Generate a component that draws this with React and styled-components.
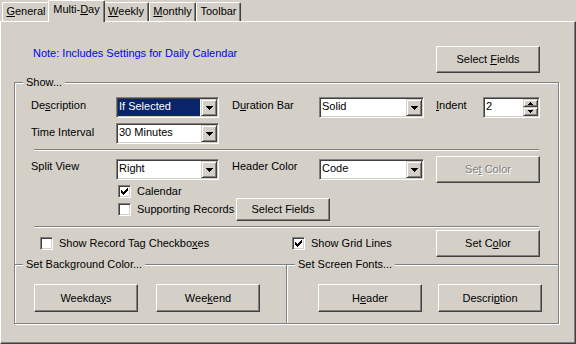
import React from 'react';
import styled, { createGlobalStyle, css } from 'styled-components';

const FACE = '#d4d0c8';
const LIGHT = '#ffffff';
const SHADOW = '#808080';
const DARK = '#404040';
const NAVY = '#0a246a';
const FONT = '"Liberation Sans", Arial, sans-serif';

const Global = createGlobalStyle`
  html, body { margin: 0; padding: 0; background: ${FACE}; }
  body { font-family: ${FONT}; font-size: 11px; line-height: 13px; color: #000; }
  #root { width: 576px; height: 344px; overflow: hidden; }
  * { box-sizing: border-box; }
`;

const Window = styled.div`
  width: 576px;
  height: 344px;
  display: flex;
  flex-direction: column;
  background: ${FACE};
`;

const TabStrip = styled.div`
  display: flex;
  align-items: flex-end;
  height: 21px;
  padding-left: 2px;
  position: relative;
  z-index: 1;
`;

const Tab = styled.div`
  flex: none;
  width: ${(p) => p.$w}px;
  height: 19px;
  border-top: 1px solid ${LIGHT};
  border-left: 1px solid ${LIGHT};
  border-right: 1px solid ${DARK};
  box-shadow: inset -1px 0 ${SHADOW};
  border-radius: 2px 2px 0 0;
  display: flex;
  justify-content: center;
  padding-top: 2px;
  background: ${FACE};
  white-space: nowrap;
  ${(p) =>
    p.$active &&
    css`
      width: ${p.$w + 4}px;
      height: 22px;
      margin: 0 -2px -1px;
      padding-top: 2px;
      position: relative;
      z-index: 2;
    `}
`;

const Panel = styled.div`
  width: 576px;
  height: 323px;
  border-top: 1px solid ${LIGHT};
  border-left: 1px solid ${LIGHT};
  border-right: 1px solid ${DARK};
  border-bottom: 1px solid ${DARK};
  box-shadow: inset -1px -1px ${SHADOW};
  padding: 24px 0 0 13px;
  display: flex;
  flex-direction: column;
`;

const TopRow = styled.div`
  width: 546px;
  display: flex;
  justify-content: space-between;
  align-items: flex-start;
  padding: 0 20px 0 19px;
`;

const Note = styled.span`
  color: #0000ff;
  margin-top: 1px;
`;

const Group = styled.div`
  position: relative;
  width: 545px;
  height: 242px;
  margin-top: 9px;
  border: 1px solid ${SHADOW};
  box-shadow: 1px 1px 0 ${LIGHT}, inset 1px 1px 0 ${LIGHT};
  padding-top: 14px;
  display: flex;
  flex-direction: column;
`;

const Legend = styled.span`
  position: absolute;
  top: -7px;
  left: 8px;
  padding: 0 3px;
  background: ${FACE};
  white-space: nowrap;
`;

const Row = styled.div`
  display: flex;
  align-items: ${(p) => p.$align || 'flex-start'};
  height: ${(p) => p.$h}px;
  margin-top: ${(p) => p.$mt || 0}px;
  padding-left: ${(p) => (p.$pl ?? 16)}px;
`;

const Label = styled.span`
  flex: none;
  width: ${(p) => p.$w}px;
  margin-left: ${(p) => p.$ml || 0}px;
  padding-top: ${(p) => p.$pt ?? 1}px;
  white-space: nowrap;
`;

const U = styled.span`
  text-decoration: underline;
  text-underline-offset: 1px;
`;

const Separator = styled.div`
  height: 2px;
  margin: ${(p) => p.$mt}px 19px 0;
  border-top: 1px solid ${SHADOW};
  border-bottom: 1px solid ${LIGHT};
`;

const Sunken = styled.div`
  flex: none;
  width: ${(p) => p.$w}px;
  height: 21px;
  margin-top: ${(p) => p.$mt || 0}px;
  margin-left: ${(p) => p.$ml || 0}px;
  border: 1px solid;
  border-color: ${SHADOW} ${LIGHT} ${LIGHT} ${SHADOW};
  box-shadow: inset 1px 1px ${DARK}, inset -1px -1px ${FACE};
  background: ${LIGHT};
  padding: 1px;
  display: flex;
`;

const FieldText = styled.span`
  flex: 1;
  margin-right: 1px;
  padding: 1px 0 0 1px;
  white-space: nowrap;
  overflow: hidden;
  ${(p) =>
    p.$selected &&
    css`
      background: ${NAVY};
      color: ${LIGHT};
    `}
`;

const RaisedBtn = styled.span`
  flex: none;
  width: ${(p) => p.$w || 16}px;
  height: ${(p) => p.$h || 17}px;
  border: 1px solid;
  border-color: ${FACE} ${DARK} ${DARK} ${FACE};
  box-shadow: inset 1px 1px ${LIGHT}, inset -1px -1px ${SHADOW};
  background: ${FACE};
  display: flex;
  align-items: center;
  justify-content: center;
`;

const SpinStack = styled.span`
  flex: none;
  display: flex;
  flex-direction: column;
`;

const Button = styled.button`
  flex: none;
  width: ${(p) => p.$w}px;
  height: ${(p) => p.$h}px;
  margin-left: ${(p) => p.$ml || 0}px;
  padding: 0;
  font-family: ${FONT};
  font-size: 11px;
  line-height: 13px;
  color: #000;
  background: ${FACE};
  border: 1px solid;
  border-color: ${LIGHT} ${DARK} ${DARK} ${LIGHT};
  box-shadow: inset -1px -1px ${SHADOW}, inset 1px 1px ${FACE};
  outline: none;
  &:disabled {
    color: ${SHADOW};
    text-shadow: 1px 1px 0 ${LIGHT};
  }
`;

const Check = styled.label`
  flex: none;
  display: flex;
  align-items: center;
  gap: 6px;
  width: ${(p) => (p.$w ? `${p.$w}px` : 'auto')};
  height: 13px;
  white-space: nowrap;
`;

const Box = styled.span`
  flex: none;
  width: 13px;
  height: 13px;
  border: 1px solid;
  border-color: ${SHADOW} ${LIGHT} ${LIGHT} ${SHADOW};
  box-shadow: inset 1px 1px ${DARK}, inset -1px -1px ${FACE};
  background: ${LIGHT};
  display: flex;
  align-items: center;
  justify-content: center;
`;

const BottomSection = styled.div`
  flex: 1;
  margin-top: 7px;
  display: flex;
  border-top: 1px solid ${SHADOW};
  box-shadow: inset 0 1px 0 ${LIGHT};
`;

const SubGroup = styled.div`
  position: relative;
  flex: ${(p) => (p.$w ? 'none' : '1')};
  width: ${(p) => (p.$w ? `${p.$w}px` : 'auto')};
  display: flex;
  align-items: flex-start;
  gap: ${(p) => p.$gap}px;
  padding: 19px 0 0 ${(p) => p.$pl}px;
  ${(p) =>
    p.$divider
      ? css`
          border-right: 1px solid ${SHADOW};
        `
      : css`
          box-shadow: inset 1px 0 0 ${LIGHT};
        `}
`;

const DownArrow = () => (
  <svg width="7" height="4" viewBox="0 0 7 4" shapeRendering="crispEdges">
    <path d="M0 0h7v1H0zM1 1h5v1H1zM2 2h3v1H2zM3 3h1v1H3z" fill="#000" />
  </svg>
);

const SmallArrow = ({ up }) => (
  <svg width="5" height="3" viewBox="0 0 5 3" shapeRendering="crispEdges">
    <path d={up ? 'M2 0h1v1H2zM1 1h3v1H1zM0 2h5v1H0z' : 'M0 0h5v1H0zM1 1h3v1H1zM2 2h1v1H2z'} fill="#000" />
  </svg>
);

const Tick = () => (
  <svg width="7" height="7" viewBox="0 0 7 7" shapeRendering="crispEdges">
    <path
      d="M6 0h1v3H6zM5 1h1v3H5zM4 2h1v3H4zM3 3h1v3H3zM2 4h1v3H2zM1 3h1v3H1zM0 2h1v3H0z"
      fill="#000"
    />
  </svg>
);

const Combo = ({ w, mt, ml, value, selected }) => (
  <Sunken $w={w} $mt={mt} $ml={ml}>
    <FieldText $selected={selected}>{value}</FieldText>
    <RaisedBtn>
      <DownArrow />
    </RaisedBtn>
  </Sunken>
);

const Spin = ({ w, value }) => (
  <Sunken $w={w}>
    <FieldText>{value}</FieldText>
    <SpinStack>
      <RaisedBtn $w={15} $h={8}>
        <SmallArrow up />
      </RaisedBtn>
      <RaisedBtn $w={15} $h={9}>
        <SmallArrow />
      </RaisedBtn>
    </SpinStack>
  </Sunken>
);

const CheckBox = ({ checked, children, w }) => (
  <Check $w={w}>
    <Box>{checked && <Tick />}</Box>
    <span>{children}</span>
  </Check>
);

const tabs = [
  { key: 'general', w: 48, label: <><U>G</U>eneral</> },
  { key: 'multi', w: 53, label: <>Multi-<U>D</U>ay</>, active: true },
  { key: 'weekly', w: 46, label: <><U>W</U>eekly</> },
  { key: 'monthly', w: 47, label: <><U>M</U>onthly</> },
  { key: 'toolbar', w: 45, label: <>Toolbar</> },
];

export default function App() {
  return (
    <>
      <Global />
      <Window>
        <TabStrip>
          {tabs.map((t) => (
            <Tab key={t.key} $w={t.w} $active={t.active}>
              {t.label}
            </Tab>
          ))}
        </TabStrip>
        <Panel>
          <TopRow>
            <Note>Note: Includes Settings for Daily Calendar</Note>
            <Button $w={104} $h={27}>
              Select <U>F</U>ields
            </Button>
          </TopRow>

          <Group>
            <Legend>Show...</Legend>

            <Row $h={21}>
              <Label $w={85} $pt={2}>
                De<U>s</U>cription
              </Label>
              <Combo w={103} value="If Selected" selected />
              <Label $w={87} $ml={13} $pt={2}>
                D<U>u</U>ration Bar
              </Label>
              <Combo w={105} value="Solid" />
              <Label $w={47} $ml={12} $pt={2}>
                <U>I</U>ndent
              </Label>
              <Spin w={57} value="2" />
            </Row>

            <Row $h={21} $mt={5}>
              <Label $w={85} $pt={3}>
                Time Interval
              </Label>
              <Combo w={103} value="30 Minutes" />
            </Row>

            <Separator $mt={5} />

            <Row $h={27} $mt={5}>
              <Label $w={85} $pt={4}>
                Split View
              </Label>
              <Combo w={103} mt={3} value="Right" />
              <Label $w={87} $ml={13} $pt={4}>
                Header Color
              </Label>
              <Combo w={105} mt={3} value="Code" />
              <Button $w={104} $h={27} $ml={12} disabled>
                Se<U>t</U> Color
              </Button>
            </Row>

            <Row $h={13} $mt={2} $pl={103} $align="center">
              <CheckBox checked>Calendar</CheckBox>
            </Row>

            <Row $h={23} $pl={103} $align="center">
              <CheckBox w={118}>Supporting Records</CheckBox>
              <Button $w={94} $h={23}>
                Select Fields
              </Button>
            </Row>

            <Separator $mt={5} />

            <Row $h={27} $mt={2} $pl={25} $align="center">
              <CheckBox w={252}>
                Show Record Tag Checkbo<U>x</U>es
              </CheckBox>
              <CheckBox w={144} checked>
                Show Grid Lines
              </CheckBox>
              <Button $w={104} $h={27}>
                Set C<U>o</U>lor
              </Button>
            </Row>

            <BottomSection>
              <SubGroup $w={272} $divider $pl={19} $gap={18}>
                <Legend>Set Background Color...</Legend>
                <Button $w={104} $h={28}>
                  Weekda<U>y</U>s
                </Button>
                <Button $w={104} $h={28}>
                  Wee<U>k</U>end
                </Button>
              </SubGroup>
              <SubGroup $pl={31} $gap={16}>
                <Legend>Set Screen Fonts...</Legend>
                <Button $w={104} $h={28}>
                  H<U>e</U>ader
                </Button>
                <Button $w={104} $h={28}>
                  Descri<U>p</U>tion
                </Button>
              </SubGroup>
            </BottomSection>
          </Group>
        </Panel>
      </Window>
    </>
  );
}
